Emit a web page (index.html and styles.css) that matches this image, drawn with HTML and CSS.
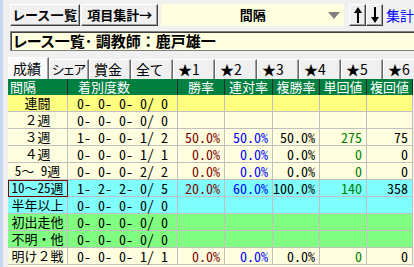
FILE: index.html
```html
<!DOCTYPE html>
<html lang="ja">
<head>
  <meta charset="UTF-8">
  <link rel="stylesheet" href="styles.css">
  <title>間隔集計</title>
</head>
<body>

<div class="app">
  <div class="toolbar">
    <button class="btn btn-list">レース一覧</button>
    <button class="btn btn-sum">項目集計→</button>
    <div class="combo">
      <span class="combo-text">間隔</span>
      <span class="combo-arrow"></span>
    </div>
    <button class="btn btn-arrow btn-up">
      <svg width="8" height="16" viewBox="0 0 8 16"><path d="M4 0 L8 6 L5 6 L5 16 L3 16 L3 6 L0 6 Z" fill="#000"/></svg>
    </button>
    <button class="btn btn-arrow">
      <svg width="8" height="16" viewBox="0 0 8 16"><path d="M4 16 L8 10 L5 10 L5 0 L3 0 L3 10 L0 10 Z" fill="#000"/></svg>
    </button>
    <span class="link">集計</span>
  </div>

  <div class="title"><span class="kana">レース一覧･</span> 調教師：鹿戸雄一</div>

  <div class="tabs">
    <div class="tab active">成績</div>
    <div class="tab narrow">シェア</div>
    <div class="tab">賞金</div>
    <div class="tab">全て</div>
    <div class="tab">★1</div>
    <div class="tab">★2</div>
    <div class="tab">★3</div>
    <div class="tab">★4</div>
    <div class="tab">★5</div>
    <div class="tab">★6</div>
  </div>

  <table class="stats">
    <colgroup>
      <col style="width:60px"><col style="width:110px"><col style="width:47px"><col style="width:48px"><col style="width:47px"><col style="width:47px"><col style="width:46px">
    </colgroup>
    <tr class="head">
      <th class="h-left">間隔</th><th class="h-count">着別度数</th><th>勝率</th><th>連対率</th><th>複勝率</th><th>単回値</th><th>複回値</th>
    </tr>
    <tr class="yellow">
      <td class="label">連闘</td><td class="count">0- 0- 0- 0/ 0</td><td></td><td></td><td></td><td></td><td></td>
    </tr>
    <tr class="cream">
      <td class="label">２週</td><td class="count">0- 0- 0- 0/ 0</td><td></td><td></td><td></td><td></td><td></td>
    </tr>
    <tr class="cream">
      <td class="label">３週</td><td class="count">1- 0- 0- 1/ 2</td><td class="win">50.0%</td><td class="place">50.0%</td><td>50.0%</td><td class="ret">275</td><td>75</td>
    </tr>
    <tr class="cream">
      <td class="label">４週</td><td class="count">0- 0- 0- 1/ 1</td><td class="win">0.0%</td><td class="place">0.0%</td><td>0.0%</td><td class="ret">0</td><td>0</td>
    </tr>
    <tr class="cream">
      <td class="label">5～ 9週</td><td class="count">0- 0- 0- 2/ 2</td><td class="win">0.0%</td><td class="place">0.0%</td><td>0.0%</td><td class="ret">0</td><td>0</td>
    </tr>
    <tr class="cyan">
      <td class="label current">10～25週</td><td class="count">1- 2- 2- 0/ 5</td><td class="win">20.0%</td><td class="place">60.0%</td><td>100.0%</td><td class="ret">140</td><td>358</td>
    </tr>
    <tr class="cyan">
      <td class="label">半年以上</td><td class="count">0- 0- 0- 0/ 0</td><td></td><td></td><td></td><td></td><td></td>
    </tr>
    <tr class="green">
      <td class="label">初出走他</td><td class="count">0- 0- 0- 0/ 0</td><td></td><td></td><td></td><td></td><td></td>
    </tr>
    <tr class="green">
      <td class="label">不明・他</td><td class="count">0- 0- 0- 0/ 0</td><td></td><td></td><td></td><td></td><td></td>
    </tr>
    <tr class="cream">
      <td class="label">明け２戦</td><td class="count">0- 0- 0- 1/ 1</td><td class="win">0.0%</td><td class="place">0.0%</td><td>0.0%</td><td class="ret">0</td><td>0</td>
    </tr>
  </table>
  <div class="next-row"></div>
</div>

</body>
</html>
```
FILE: styles.css
```css
* {
  box-sizing: border-box;
}

body {
  margin: 0;
  width: 414px;
  height: 267px;
  overflow: hidden;
  background: #f0f0f0;
  font-family: "Noto Sans CJK JP", sans-serif;
  color: #000;
}

.app {
  height: 267px;
  overflow: hidden;
  border-left: 3px solid #c4d8ee;
}

/* top bar */
.toolbar {
  display: flex;
  align-items: center;
  height: 22px;
  margin-top: 4px;
  padding-left: 7px;
  white-space: nowrap;
}

.btn {
  height: 22px;
  padding: 0;
  background: #f0f0f0;
  border: 1px solid;
  border-color: #fff #404040 #404040 #fff;
  box-shadow: inset -1px -1px #a0a0a0;
  font: bold 13px/18px "Noto Sans CJK JP", sans-serif;
  color: #000;
}

.btn-list {
  width: 71px;
  font-feature-settings: "palt";
  letter-spacing: 0.5px;
}

.btn-sum {
  width: 78px;
  margin-left: 1px;
}

.combo {
  display: grid;
  grid-template-columns: 1fr auto 1fr;
  align-items: center;
  width: 185px;
  height: 22px;
  margin-left: 3px;
  background: #ffffe0;
}

.combo-text {
  grid-column: 2;
  font-size: 13px;
  font-weight: bold;
  line-height: 16px;
}

.combo-arrow {
  justify-self: end;
  margin-right: 4px;
  width: 0;
  height: 0;
  border-left: 6px solid transparent;
  border-right: 6px solid transparent;
  border-top: 7px solid #808080;
}

.btn-arrow {
  width: 17px;
  display: flex;
  align-items: center;
  justify-content: center;
}

.btn-up {
  margin-left: 5px;
}

.link {
  margin-left: 3px;
  color: #0000ff;
  font-size: 14px;
  line-height: 16px;
}

/* title */
.title {
  height: 20px;
  margin: 5px 0 0 7px;
  padding-left: 2px;
  background: #ffffe0;
  border: 1px solid #808080;
  border-right: none;
  box-shadow: inset 1px 1px #404040;
  font-size: 15px;
  font-weight: bold;
  line-height: 18px;
  white-space: nowrap;
  overflow: hidden;
}

.title .kana {
  font-feature-settings: "palt";
}

/* tabs */
.tabs {
  display: flex;
  align-items: flex-end;
  height: 22px;
  margin: 6px 0 0 5px;
  overflow: hidden;
}

.tab {
  flex-shrink: 0;
  width: 42px;
  height: 20px;
  padding-left: 4px;
  border-top: 1px solid #fff;
  border-left: 1px solid #fff;
  border-right: 1px solid #696969;
  box-shadow: inset -1px 0 #a0a0a0;
  font-size: 14px;
  line-height: 18px;
  font-feature-settings: "palt";
  white-space: nowrap;
  overflow: hidden;
}

.tab.active {
  width: 41px;
  height: 22px;
  background: #fafafa;
  line-height: 20px;
}

.tab.narrow {
  width: 40px;
  padding-left: 2px;
  font-size: 13px;
  letter-spacing: -0.5px;
}

/* table */
.stats {
  margin-left: 5px;
  width: 405px;
  table-layout: fixed;
  border-collapse: separate;
  border-spacing: 0;
  font-family: "Noto Sans Mono CJK JP", "Noto Sans CJK JP", monospace;
  font-size: 14px;
}

.stats th {
  height: 16px;
  padding: 0;
  background: #008040;
  color: #fff;
  font-size: 13px;
  font-weight: normal;
  line-height: 16px;
  border-right: 1px solid #2a2a2a;
  text-align: center;
  white-space: nowrap;
}

.stats th.h-left {
  text-align: left;
  padding-left: 2px;
}

.stats th.h-count {
  text-align: left;
  padding-left: 10px;
}

.stats td {
  height: 17px;
  padding: 0 4px 0 0;
  border-right: 1px solid #c0c0c0;
  border-bottom: 1px solid #c0c0c0;
  line-height: 16px;
  text-align: right;
  white-space: pre;
}

.stats td.label {
  padding: 0;
  font-size: 13px;
  text-align: center;
}

.stats td.count {
  padding: 0;
  text-align: center;
}

.stats td.current {
  outline: 1px solid #800000;
  outline-offset: -1px;
}

.stats td.win {
  color: #800000;
}

.stats td.place {
  color: #0000ff;
}

.stats td.ret {
  color: #008000;
}

.yellow td {
  background: #ffff80;
}

.cream td {
  background: #ffffe0;
}

.cyan td {
  background: #80ffff;
}

.green td {
  background: #80ff80;
}

.next-row {
  height: 17px;
  width: 405px;
  margin-left: 5px;
  background: #ffffe0;
}
```
